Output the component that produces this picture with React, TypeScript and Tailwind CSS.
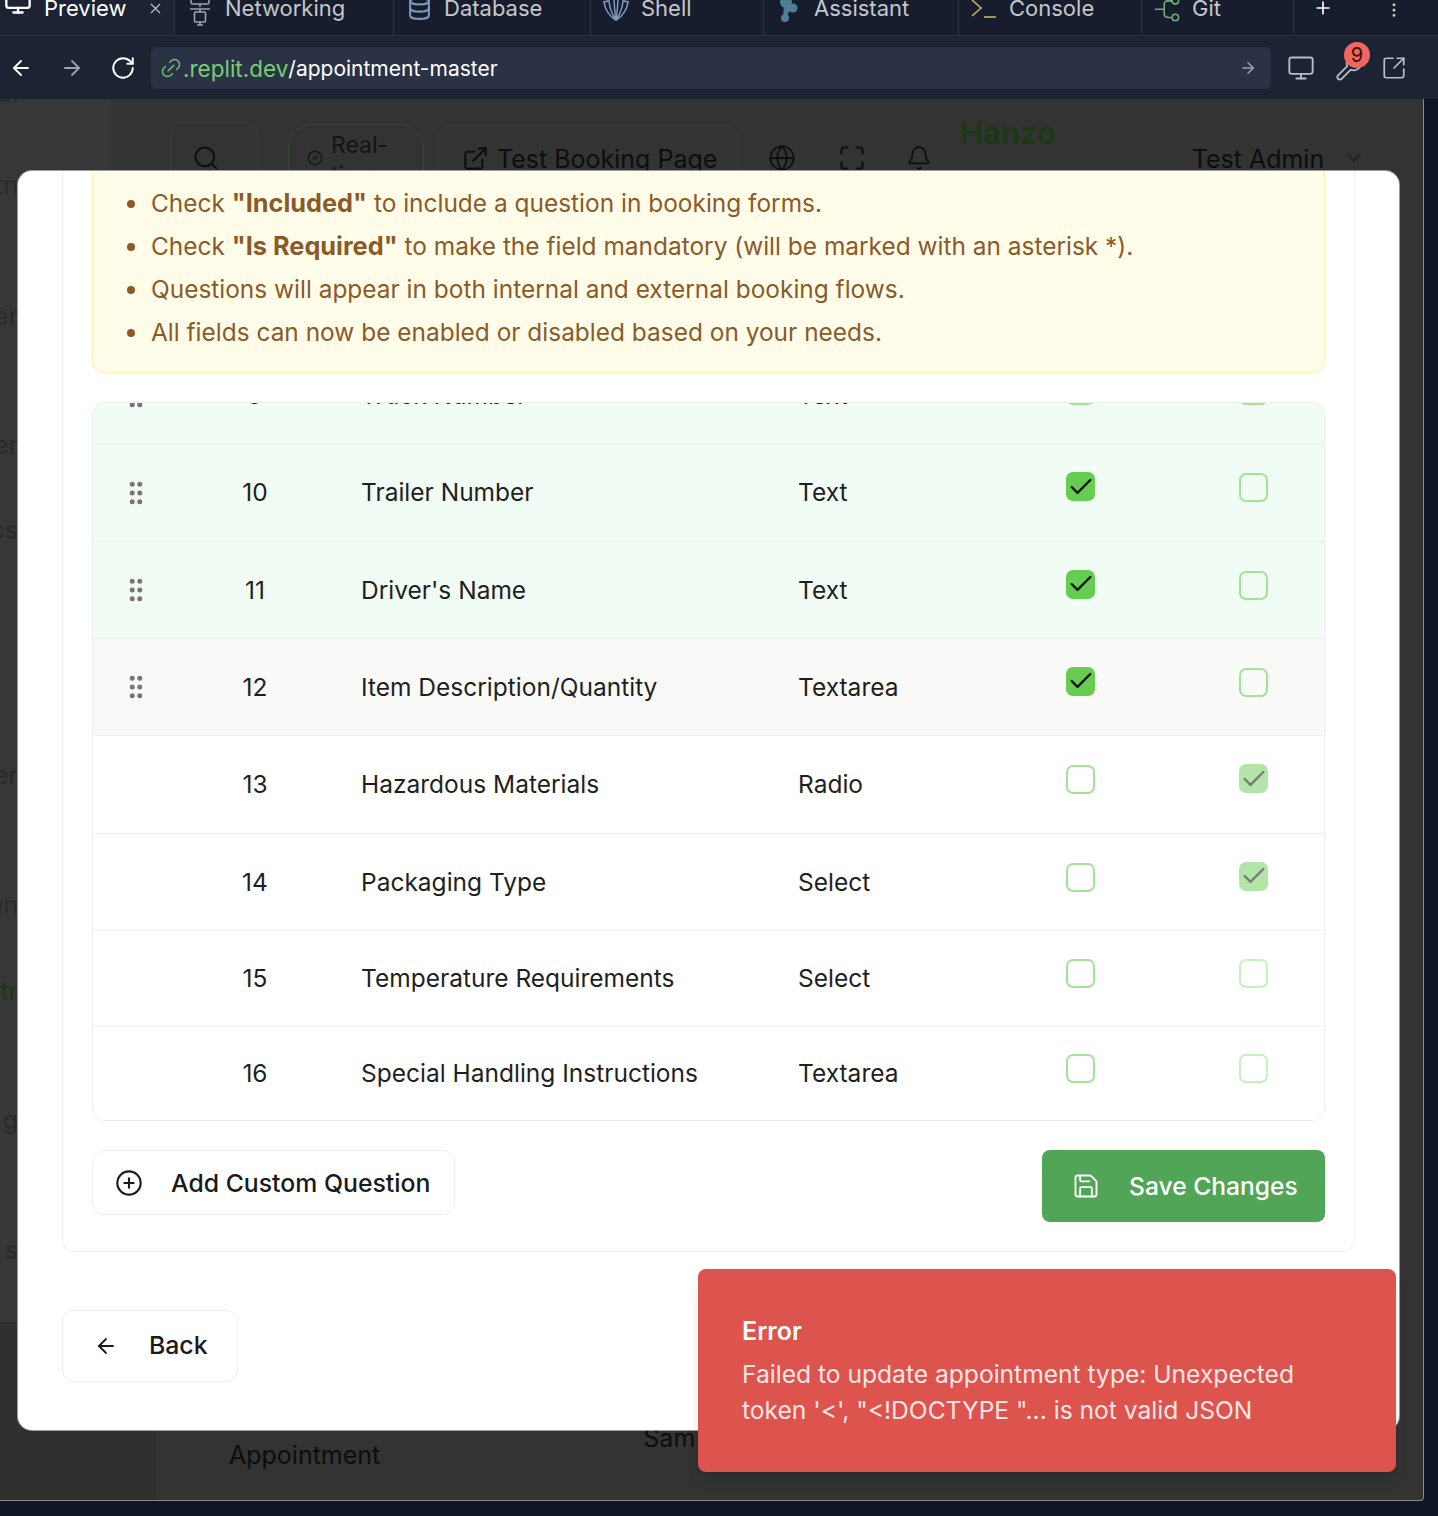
import React from "react";
import {
  ArrowLeft,
  ArrowRight,
  Bell,
  Check,
  ChevronDown,
  CircleCheck,
  CirclePlus,
  Database,
  ExternalLink,
  Globe,
  GripVertical,
  Link2,
  Maximize,
  Monitor,
  MoreVertical,
  Plus,
  RotateCw,
  Save,
  Search,
  SquareArrowOutUpRight,
  Wrench,
  X,
} from "lucide-react";

type Row = {
  num: number;
  name: string;
  type: string;
  included: boolean;
  required: boolean;
  locked?: boolean;
  tint: string;
  height: string;
  drag: boolean;
};

const rows: Row[] = [
  { num: 10, name: "Trailer Number", type: "Text", included: true, required: false, tint: "bg-[#f1fcf4]", height: "h-[98px]", drag: true },
  { num: 11, name: "Driver's Name", type: "Text", included: true, required: false, tint: "bg-[#f1fcf4]", height: "h-[97px]", drag: true },
  { num: 12, name: "Item Description/Quantity", type: "Textarea", included: true, required: false, tint: "bg-[#f9f9f8]", height: "h-[97px]", drag: true },
  { num: 13, name: "Hazardous Materials", type: "Radio", included: false, required: true, locked: true, tint: "bg-white", height: "h-[98px]", drag: false },
  { num: 14, name: "Packaging Type", type: "Select", included: false, required: true, locked: true, tint: "bg-white", height: "h-[97px]", drag: false },
  { num: 15, name: "Temperature Requirements", type: "Select", included: false, required: false, locked: true, tint: "bg-white", height: "h-[96px]", drag: false },
  { num: 16, name: "Special Handling Instructions", type: "Textarea", included: false, required: false, locked: true, tint: "bg-white", height: "h-[93px]", drag: false },
];

const notes = [
  <>Check <b className="text-[25.3px] font-bold leading-none">"Included"</b> to include a question in booking forms.</>,
  <>Check <b className="text-[25.3px] font-bold leading-none">"Is Required"</b> to make the field mandatory (will be marked with an asterisk *).</>,
  <>Questions will appear in both internal and external booking flows.</>,
  <>All fields can now be enabled or disabled based on your needs.</>,
];

// words of the nav behind the dialog, only their tails stick out on the left
const sideItems = [
  { text: "al", cls: "-mt-[21px] text-[#2a2a2a]" },
  { text: "tn", cls: "mt-[62px] text-[#2a2a2a]" },
  { text: "er", cls: "mt-[101px] text-[#2a2a2a]" },
  { text: "er", cls: "mt-[99px] text-[#2a2a2a]" },
  { text: "cs", cls: "mt-[55px] text-[#2a2a2a]" },
  { text: "er", cls: "mt-[215px] text-[#2a2a2a]" },
  { text: "en", cls: "mt-[100px] text-[#2a2a2a]" },
  { text: "tr", cls: "mt-[56px] text-[#1c3a14]" },
  { text: "g", cls: "mt-[99px] text-[#2a2a2a]" },
  { text: "s", cls: "mt-[100px] text-[#2a2a2a]" },
];

function NetworkingIcon() {
  return (
    <svg width="24" height="30" viewBox="0 0 24 30" fill="none" stroke="#9da2ab" strokeWidth="1.6">
      <rect x="3" y="-6" width="18" height="10" rx="1.5" />
      <path d="M12 4v3M2 9h20M12 9v3M9 25h6M12 22v3" />
      <rect x="6.5" y="12" width="11" height="10" rx="1" />
    </svg>
  );
}

function ShellIcon() {
  return (
    <svg width="28" height="24" viewBox="0 0 28 24" fill="none" stroke="#7c98bd" strokeWidth="1.6">
      <path d="M14 21C7 17 2 9 1 1c3 0 4 0 5-2M14 21C10 15 7 7 6-2M14 21c-1-7-2-15-2-23M14 21c1-7 2-15 2-23M14 21c4-6 7-14 8-23M14 21c7-4 12-12 13-20-3 0-4 0-5-2" />
    </svg>
  );
}

function AssistantIcon() {
  return (
    <svg width="20" height="24" viewBox="0 0 20 24" fill="#4f7f96">
      <circle cx="7" cy="2" r="6" />
      <circle cx="14" cy="8" r="4.5" />
      <circle cx="6" cy="18" r="4" />
      <path d="M5 6l8 0-6 12-3 0z" />
    </svg>
  );
}

function ConsoleIcon() {
  return (
    <svg width="26" height="22" viewBox="0 0 26 22" fill="none" strokeWidth="1.6">
      <path d="M1 0l9 8-9 8" stroke="#c9b26b" />
      <path d="M13 17h12" stroke="#c9b26b" />
    </svg>
  );
}

function GitIcon() {
  return (
    <svg width="28" height="24" viewBox="0 0 28 24" fill="none" stroke="#6fae75" strokeWidth="1.7">
      <path d="M1 9h10M11 9V3c0-2 2-3 4-3h5M11 9v5c0 3 2 4 5 4h3" />
      <circle cx="23" cy="0" r="3.5" />
      <circle cx="23" cy="18" r="3.5" />
    </svg>
  );
}

const tabs = [
  { label: "Networking", w: "w-[219px]", icon: <NetworkingIcon /> },
  { label: "Database", w: "w-[197px]", icon: <Database size={25} className="-mt-1 text-[#7c98bd]" /> },
  { label: "Shell", w: "w-[173px]", icon: <ShellIcon /> },
  { label: "Assistant", w: "w-[195px]", icon: <AssistantIcon /> },
  { label: "Console", w: "w-[183px]", icon: <ConsoleIcon /> },
  { label: "Git", w: "w-[152px]", icon: <GitIcon /> },
];

function Box({ checked, locked }: { checked: boolean; locked?: boolean }) {
  if (checked) {
    return (
      <span className={`mb-[12px] flex h-[29px] w-[29px] items-center justify-center rounded-[7px] ${locked ? "bg-[#b3e5a8]" : "bg-[#66cc52]"}`}>
        <Check size={28} strokeWidth={2.1} className={locked ? "text-[#7c7c7c]" : "text-[#171717]"} />
      </span>
    );
  }
  return <span className={`mb-[10px] block h-[29px] w-[29px] rounded-[7px] border-2 ${locked ? "border-[#c7efc0]" : "border-[#a0e596]"}`} />;
}

function TableRow({ row, className }: { row: Row; className: string }) {
  return (
    <div className={`flex items-center text-[24.5px] text-[#1f1f1f] ${className}`}>
      <span className="flex w-[87px] justify-center pr-[2px]">
        {row.drag && <GripVertical size={30} className="text-[#7b7373]" />}
      </span>
      <span className="w-[150px] text-center">{row.num}</span>
      <span className="ml-[31px] w-[437px]">{row.name}</span>
      <span className="w-[188px]">{row.type}</span>
      <span className="ml-[80px] flex w-[29px]"><Box checked={row.included} /></span>
      <span className="ml-[144px] flex w-[29px]"><Box checked={row.required} locked={row.locked} /></span>
    </div>
  );
}

export default function App() {
  return (
    <div className="relative h-[1516px] w-[1438px] overflow-hidden bg-[#0e1525] font-['Inter',sans-serif]">
      {/* replit chrome */}
      <div className="flex h-[36px] items-start overflow-hidden border-b border-[#2b3245] bg-[#171d2d] text-[22px] text-[#c2c8cc]">
        <div className="flex h-[36px] w-[174px] items-start gap-3 bg-[#1c2333] pl-1 text-white">
          <Monitor size={28} className="-mt-3 shrink-0" />
          <span className="-mt-[8px] leading-[32px]">Preview</span>
          <X size={17} strokeWidth={1.5} className="ml-[8px] shrink-0 text-[#c2c8cc]" />
        </div>
        {tabs.map((t) => (
          <div key={t.label} className={`flex h-[36px] items-start gap-3 border-l border-[#2b3245] pl-3 ${t.w}`}>
            <span className="flex h-[24px] w-[26px] shrink-0 justify-center">{t.icon}</span>
            <span className="-mt-[8px] leading-[32px]">{t.label}</span>
          </div>
        ))}
        <div className="flex h-[36px] flex-1 items-start gap-[52px] border-l border-[#2b3245] pl-[19px] text-white">
          <Plus size={20} className="-mt-[2px]" />
          <MoreVertical size={18} className="mt-[1px] text-[#c2c8cc]" />
        </div>
      </div>
      <div className="flex h-[63px] items-center bg-[#1c2333] pl-[9px] pr-[28px]">
        <ArrowLeft size={24} strokeWidth={1.8} className="text-white" />
        <ArrowRight size={24} strokeWidth={1.8} className="ml-[27px] text-[#9da2ab]" />
        <RotateCw size={26} strokeWidth={1.8} className="ml-[26px] text-white" />
        <div className="ml-[15px] flex h-[42px] w-[1120px] items-center rounded-md bg-[#2b3245] pl-2 pr-[14px]">
          <Link2 size={24} strokeWidth={1.5} className="-rotate-45 text-[#6cc46f]" />
          <span className="pt-[2px] text-[22.5px] text-[#73d073]">.replit.dev</span>
          <span className="pt-[2px] text-[21px] text-white">/appointment-master</span>
          <ArrowRight size={18} className="ml-auto text-[#9da2ab]" />
        </div>
        <Monitor size={28} strokeWidth={1.6} className="ml-4 text-[#b9bdc4]" />
        <div className="relative ml-[20px]">
          <Wrench size={28} strokeWidth={1.6} className="text-[#b9bdc4]" />
          <span className="absolute -right-[7px] -top-[12px] flex h-[26px] w-[26px] items-center justify-center rounded-full bg-[#f0675f] text-[20px] text-[#3a0c09]">9</span>
        </div>
        <SquareArrowOutUpRight size={26} strokeWidth={1.6} className="ml-[18px] text-[#b9bdc4]" />
      </div>

      {/* dimmed app behind the dialog */}
      <div className="flex h-[1402px] w-[1424px] flex-col overflow-hidden rounded-br border-b border-r border-[#8c8c8c] bg-[#333333] text-[25px] text-[#0d0d0d]">
        <div className="flex h-[1223px]">
          <div className="flex w-[111px] flex-col overflow-hidden border-r border-[#383838] bg-[#373737]">
            {sideItems.map((s, i) => (
              <div key={i} className={`flex h-[30px] w-[18px] justify-end leading-[30px] ${s.cls}`}>{s.text}</div>
            ))}
          </div>
          <div className="flex h-[118px] flex-1 items-center pl-[59px]">
            <div className="flex h-[72px] w-[88px] items-center justify-center rounded-xl border border-[#3f3f3f]">
              <Search size={28} strokeWidth={1.7} className="-ml-[16px]" />
            </div>
            <div className="ml-[30px] flex h-[68px] w-[136px] items-center gap-2 overflow-hidden rounded-[24px] border border-[#3a453a] pl-[18px] text-[#141414]">
              <CircleCheck size={16} className="shrink-0" />
              <span className="pt-[4px] text-[23px] leading-[30px]">Real-<br />time</span>
            </div>
            <div className="ml-[14px] flex h-[66px] w-[300px] items-center gap-[8px] rounded-xl border border-[#3f3f3f] pl-[23px]">
              <ExternalLink size={27} strokeWidth={1.8} />
              <span className="pt-[4px]">Test Booking Page</span>
            </div>
            <Globe size={28} strokeWidth={1.5} className="ml-[30px] shrink-0" />
            <Maximize size={28} strokeWidth={1.8} className="ml-[42px] shrink-0" />
            <Bell size={26} strokeWidth={1.5} className="ml-[40px] shrink-0" />
            <div className="-mt-[50px] ml-[28px] text-[31px] font-semibold text-[#1a3a12]">Hanzo</div>
            <span className="ml-[136px] pt-[4px]">Test Admin</span>
            <ChevronDown size={22} className="ml-[19px] text-[#222]" />
          </div>
        </div>
        <div className="flex flex-1 items-start">
          <div className="h-full w-[156px] bg-[#303030]" />
          <span className="ml-[73px] mt-[118px] leading-[30px]">Appointment</span>
          <span className="ml-[263px] mt-[101px] leading-[30px]">Sam</span>
        </div>
      </div>

      {/* dialog */}
      <div className="absolute left-[18px] top-[171px] flex h-[1259px] w-[1381px] flex-col overflow-hidden rounded-[14px] bg-white px-[44px] shadow-[0_0_0_1px_rgba(200,200,200,0.7)]">
        <div className="h-[1081px] shrink-0 rounded-b-xl border-x border-b border-[#f0f0f0] px-[29px]">
          <ul className="h-[202px] list-disc rounded-b-xl border-x border-b border-[#fdf2b3] bg-[#fffce9] pl-[57px] pt-[11px] text-[24.45px] leading-[43px] text-[#8a5a28]">
            {notes.map((n, i) => (
              <li key={i} className="pl-[1px]">{n}</li>
            ))}
          </ul>
          <div className="mt-[29px] overflow-hidden rounded-xl border border-[#efefef]">
            <div className="h-[41px] overflow-hidden border-b border-[#efefef] bg-[#f1fcf4]">
              <TableRow
                row={{ num: 9, name: "Truck Number", type: "Text", included: false, required: false, tint: "", height: "", drag: true }}
                className="-mt-[56px] h-[97px]"
              />
            </div>
            {rows.map((r, i) => (
              <TableRow
                key={r.num}
                row={r}
                className={`${r.height} ${r.tint} ${i < rows.length - 1 ? "border-b border-[#efefef]" : ""}`}
              />
            ))}
          </div>
          <div className="mt-[29px] flex items-start justify-between">
            <button className="flex h-[65px] w-[363px] items-center gap-[28px] rounded-xl border border-[#efefef] pl-[22px] text-[24.8px] font-medium text-[#1a1a1a]">
              <CirclePlus size={28} strokeWidth={1.8} />
              <span className="pt-[2px]">Add Custom Question</span>
            </button>
            <button className="flex h-[72px] w-[283px] items-center gap-[29px] rounded-lg bg-[#51a557] pl-[30px] text-[24.6px] font-medium text-white">
              <Save size={28} strokeWidth={1.6} />
              <span>Save Changes</span>
            </button>
          </div>
        </div>
        <button className="mt-[58px] flex h-[72px] w-[176px] shrink-0 items-center gap-[31px] rounded-xl border border-[#efefef] pl-[31px] text-[24.8px] font-medium text-[#1a1a1a]">
          <ArrowLeft size={24} strokeWidth={1.8} />
          Back
        </button>
      </div>

      {/* toast */}
      <div className="absolute left-[698px] top-[1269px] h-[203px] w-[698px] rounded-lg bg-[#dd534e] pl-[44px] pt-[44px] text-white shadow-lg">
        <div className="text-[25px] font-semibold leading-[36px]">Error</div>
        <div className="mt-[7px] text-[24.6px] leading-[36px] text-[#fbe6e5]">
          Failed to update appointment type: Unexpected<br />
          token '&lt;', "&lt;!DOCTYPE "... is not valid JSON
        </div>
      </div>
    </div>
  );
}
